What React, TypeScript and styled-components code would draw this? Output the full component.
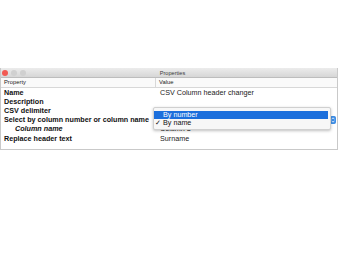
import React from 'react';
import styled, { createGlobalStyle } from 'styled-components';

const GlobalStyle = createGlobalStyle`
  html, body {
    margin: 0;
    padding: 0;
    background: #ffffff;
    font-family: 'Liberation Sans', Arial, sans-serif;
  }
`;

const Page = styled.div`
  width: 340px;
  height: 260px;
  padding-top: 68px;
  box-sizing: border-box;
`;

const Window = styled.div`
  width: 338px;
  height: 82px;
  border: 1px solid #c9c9c9;
  border-top: none;
  box-sizing: border-box;
  background: #ffffff;
  display: flex;
  flex-direction: column;
`;

const TitleBar = styled.div`
  height: 10px;
  background: linear-gradient(#ececec, #d6d6d6);
  border-bottom: 1px solid #bdbdbd;
  box-sizing: border-box;
  display: flex;
  align-items: center;
`;

const Lights = styled.div`
  display: flex;
  gap: 3px;
  padding-left: 1px;
`;

const Light = styled.span<{ $color: string }>`
  width: 6px;
  height: 6px;
  border-radius: 50%;
  background: ${(p) => p.$color};
`;

const Title = styled.div`
  flex: 1;
  text-align: center;
  font-size: 5.6px;
  color: #3a3a3a;
  padding-right: 18px;
`;

const HeaderRow = styled.div`
  height: 9.5px;
  display: grid;
  grid-template-columns: 154px 1fr;
  border-bottom: 1px solid #d8d8d8;
  box-sizing: border-box;
  background: #fafafa;
`;

const HeaderCell = styled.div<{ $divider?: boolean }>`
  font-size: 5.8px;
  color: #222;
  padding-left: 3px;
  border-left: ${(p) => (p.$divider ? '1px solid #d8d8d8' : 'none')};
  display: flex;
  align-items: center;
`;

const Rows = styled.div`
  display: grid;
  grid-template-columns: 157px 1fr;
  grid-auto-rows: 9.2px;
`;

const Label = styled.div<{ $sub?: boolean }>`
  font-size: 7.2px;
  font-weight: bold;
  font-style: ${(p) => (p.$sub ? 'italic' : 'normal')};
  padding-left: ${(p) => (p.$sub ? '14px' : '3px')};
  color: #111;
  display: flex;
  align-items: center;
  white-space: nowrap;
`;

const Value = styled.div`
  font-size: 7.2px;
  color: #1a1a1a;
  padding-left: 2px;
  display: flex;
  align-items: center;
  white-space: nowrap;
  position: relative;
`;

const SelectButton = styled.div`
  position: absolute;
  left: 0;
  top: 0.5px;
  width: 178px;
  height: 8px;
  border: 1px solid #c4c4c4;
  border-radius: 2px;
  box-sizing: border-box;
  background: #fff;
  display: flex;
  justify-content: flex-end;
`;

const Stepper = styled.div`
  width: 6px;
  height: 8px;
  margin-top: -1px;
  margin-right: -1px;
  border-radius: 2px;
  background: #3d8ee8;
  display: flex;
  align-items: center;
  justify-content: center;
`;

const Popup = styled.div`
  position: absolute;
  left: -5px;
  top: -8px;
  width: 178px;
  padding: 2.5px 0;
  background: #f7f7f7;
  border: 1px solid #d0d0d0;
  border-radius: 2px;
  box-shadow: 0 1px 3px rgba(0, 0, 0, 0.25);
  box-sizing: border-box;
  z-index: 2;
`;

const Option = styled.div<{ $active?: boolean }>`
  height: 8px;
  display: flex;
  align-items: center;
  font-size: 7.2px;
  margin-right: 2px;
  color: ${(p) => (p.$active ? '#fff' : '#111')};
  background: ${(p) => (p.$active ? '#1c6fdc' : 'transparent')};
`;

const Check = styled.span`
  width: 8px;
  padding-left: 1px;
  font-size: 6.5px;
`;

const App: React.FC = () => {
  return (
    <Page>
      <GlobalStyle />
      <Window>
        <TitleBar>
          <Lights>
            <Light $color='#f25a53' />
            <Light $color='#d0d0d0' />
            <Light $color='#d0d0d0' />
          </Lights>
          <Title>Properties</Title>
        </TitleBar>
        <HeaderRow>
          <HeaderCell>Property</HeaderCell>
          <HeaderCell $divider>Value</HeaderCell>
        </HeaderRow>
        <Rows>
          <Label>Name</Label>
          <Value>CSV Column header changer</Value>
          <Label>Description</Label>
          <Value></Value>
          <Label>CSV delimiter</Label>
          <Value>Semicolon</Value>
          <Label>Select by column number or column name</Label>
          <Value>
            <SelectButton>
              <Stepper>
                <svg width='4' height='6' viewBox='0 0 4 6'>
                  <path d='M0.5 2.3 L2 0.8 L3.5 2.3 M0.5 3.7 L2 5.2 L3.5 3.7' stroke='#fff' strokeWidth='0.8' fill='none' />
                </svg>
              </Stepper>
            </SelectButton>
            <Popup>
              <Option $active>
                <Check />
                By number
              </Option>
              <Option>
                <Check>✓</Check>
                By name
              </Option>
            </Popup>
          </Value>
          <Label $sub>Column name</Label>
          <Value>Column 3</Value>
          <Label>Replace header text</Label>
          <Value>Surname</Value>
        </Rows>
      </Window>
    </Page>
  );
};

export default App;
